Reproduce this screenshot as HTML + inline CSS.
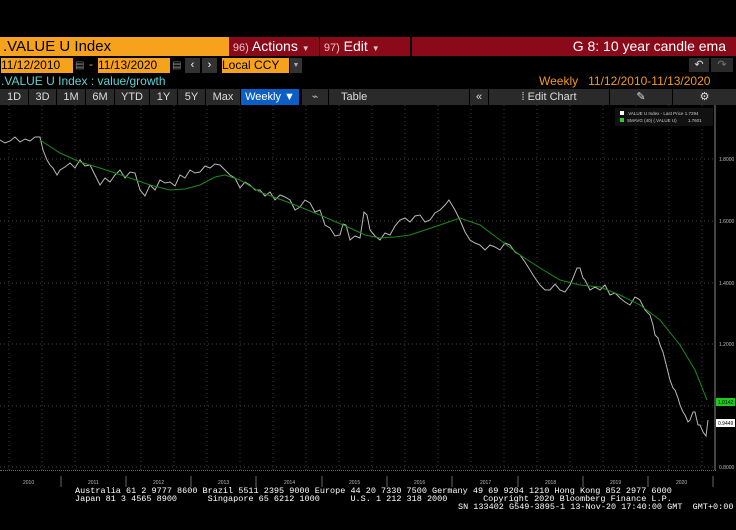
<!DOCTYPE html><html><head><style>
body{margin:0;width:736px;height:530px;background:#000;font-family:"Liberation Sans",sans-serif;position:relative;overflow:hidden;color:#fff}
.a{position:absolute;white-space:nowrap}
.tb{position:absolute;top:89px;height:16px;background:#2a2a2a;color:#ddd;font-size:11px;line-height:16px;text-align:center}
.ft{font-family:"Liberation Mono",monospace;font-size:8.5px;color:#fff;line-height:9px}
</style></head><body>
<div class="a" style="left:0;top:37px;width:228px;height:19px;background:#f7a21c;color:#000;font-size:15px;line-height:19px;padding-left:3px">.VALUE U Index</div>
<div class="a" style="left:229px;top:37px;width:90px;height:19px;background:#8b0a1a;font-size:14px;line-height:19px">&nbsp;<span style="color:#f0c0c0;font-size:11px">96)</span> Actions <span style="font-size:8px;color:#ccc">▼</span></div>
<div class="a" style="left:320px;top:37px;width:90px;height:19px;background:#8b0a1a;font-size:14px;line-height:19px">&nbsp;<span style="color:#f0c0c0;font-size:11px">97)</span> Edit <span style="font-size:8px;color:#ccc">▼</span></div>
<div class="a" style="left:412px;top:37px;width:324px;height:19px;background:#8b0a1a;font-size:14px;line-height:19px;text-align:right;padding-right:0"><span style="position:absolute;right:10px">G 8: 10 year candle ema</span></div>
<div class="a" style="left:1px;top:58px;width:72px;height:15px;background:#f7a21c;color:#000;font-size:12px;line-height:15px">11/12/2010</div>
<div class="a" style="left:75px;top:58px;width:10px;height:15px;color:#888;font-size:10px;line-height:15px">▤</div>
<div class="a" style="left:89px;top:57px;color:#f7a21c;font-size:12px">-</div>
<div class="a" style="left:98px;top:58px;width:72px;height:15px;background:#f7a21c;color:#000;font-size:12px;line-height:15px">11/13/2020</div>
<div class="a" style="left:172px;top:58px;width:10px;height:15px;color:#888;font-size:10px;line-height:15px">▤</div>
<div class="a" style="left:185px;top:58px;width:15px;height:15px;background:#333;font-size:11px;line-height:15px;text-align:center">‹</div>
<div class="a" style="left:202px;top:58px;width:15px;height:15px;background:#333;font-size:11px;line-height:15px;text-align:center">›</div>
<div class="a" style="left:222px;top:58px;width:67px;height:15px;background:#f7a21c;color:#000;font-size:12px;line-height:15px">Local CCY</div>
<div class="a" style="left:290px;top:58px;width:12px;height:15px;background:#333;color:#aaa;font-size:7px;line-height:15px;text-align:center">▼</div>
<div class="a" style="left:689px;top:58px;width:20px;height:14px;background:#2a2a2a;color:#ddd;font-size:11px;line-height:14px;text-align:center">↶</div>
<div class="a" style="left:711px;top:58px;width:22px;height:14px;background:#2a2a2a;color:#777;font-size:11px;line-height:14px;text-align:center">↷</div>
<div class="a" style="left:1px;top:74px;color:#5fd3d3;font-size:12px">.VALUE U Index : value/growth</div>
<div class="a" style="left:539px;top:74px;color:#f39a1c;font-size:12px">Weekly&nbsp;&nbsp; 11/12/2010-11/13/2020</div>
<div class="tb" style="left:0;width:28px">1D</div><div class="tb" style="left:29px;width:27px">3D</div><div class="tb" style="left:57px;width:28px">1M</div><div class="tb" style="left:86px;width:28px">6M</div><div class="tb" style="left:115px;width:34px">YTD</div><div class="tb" style="left:150px;width:27px">1Y</div><div class="tb" style="left:178px;width:27px">5Y</div><div class="tb" style="left:206px;width:34px">Max</div>
<div class="tb" style="left:241px;width:58px;background:#0b5fc4;color:#fff">Weekly ▼</div>
<div class="tb" style="left:302px;width:26px;color:#aaa">⌁</div>
<div class="tb" style="left:329px;width:140px;text-align:left;padding-left:12px;box-sizing:border-box">Table</div>
<div class="tb" style="left:470px;width:18px">«</div>
<div class="tb" style="left:489px;width:120px">⁞ Edit Chart</div>
<div class="tb" style="left:610px;width:62px">✎</div>
<div class="tb" style="left:673px;width:63px">⚙</div>
<svg class="a" style="left:0;top:105px" width="736" height="365" viewBox="0 105 736 365">
<g stroke="#444" stroke-dasharray="1,3" stroke-width="1">
<line x1="0" y1="159" x2="715" y2="159"/><line x1="0" y1="221" x2="715" y2="221"/><line x1="0" y1="283" x2="715" y2="283"/><line x1="0" y1="344" x2="715" y2="344"/><line x1="0" y1="406" x2="715" y2="406"/><line x1="0" y1="467" x2="715" y2="467"/>
</g>
<g stroke="#3a3a3a" stroke-dasharray="1,3">
<line x1="9" y1="105" x2="9" y2="470"/><line x1="42" y1="105" x2="42" y2="470"/><line x1="75" y1="105" x2="75" y2="470"/><line x1="108" y1="105" x2="108" y2="470"/><line x1="141" y1="105" x2="141" y2="470"/><line x1="174" y1="105" x2="174" y2="470"/><line x1="207" y1="105" x2="207" y2="470"/><line x1="240" y1="105" x2="240" y2="470"/><line x1="273" y1="105" x2="273" y2="470"/><line x1="306" y1="105" x2="306" y2="470"/><line x1="339" y1="105" x2="339" y2="470"/><line x1="372" y1="105" x2="372" y2="470"/><line x1="405" y1="105" x2="405" y2="470"/><line x1="438" y1="105" x2="438" y2="470"/><line x1="471" y1="105" x2="471" y2="470"/><line x1="504" y1="105" x2="504" y2="470"/><line x1="537" y1="105" x2="537" y2="470"/><line x1="570" y1="105" x2="570" y2="470"/><line x1="603" y1="105" x2="603" y2="470"/><line x1="636" y1="105" x2="636" y2="470"/><line x1="669" y1="105" x2="669" y2="470"/><line x1="702" y1="105" x2="702" y2="470"/>
</g>
<line x1="715" y1="105" x2="715" y2="470" stroke="#888"/>
<g font-family="Liberation Sans" font-size="5" fill="#bbb"><text x="719" y="161">1.8000</text><text x="719" y="223">1.6000</text><text x="719" y="285">1.4000</text><text x="719" y="346">1.2000</text><text x="719" y="469">0.8000</text></g>
<polyline fill="none" stroke="#b8b8b8" stroke-width="1" points="0,140 5,143 10,141 15,137 20,142 25,139 30,141 35,137 40,137 43,150 47,160 50,165 53,168 57,175 60,170 65,167 70,163 75,168 80,160 85,166 90,165 95,175 100,185 105,178 110,182 115,175 120,170 125,178 130,172 135,173 140,190 145,196 150,185 155,190 160,180 165,183 170,182 175,186 180,175 185,178 190,170 195,173 200,172 205,166 210,168 215,164 220,165 225,170 230,175 235,178 240,188 245,182 250,185 255,190 260,190 265,196 270,192 275,200 280,195 285,197 290,200 295,210 300,207 305,200 310,203 315,212 320,210 325,225 330,228 335,236 340,235 343,224 346,225 350,240 355,236 360,238 364,212 367,215 370,230 375,236 380,240 385,233 390,235 395,226 400,220 405,218 410,222 415,216 420,215 425,222 430,220 435,213 440,210 445,205 449,200 452,205 455,210 460,220 465,232 470,240 475,243 480,245 485,250 490,245 495,247 500,250 505,243 510,245 515,252 520,255 525,262 530,270 535,278 540,285 545,290 550,290 555,284 560,290 565,292 570,285 573,278 577,268 580,268 583,278 585,280 590,290 595,287 600,290 605,285 610,295 615,293 620,298 625,302 630,305 635,297 640,300 645,310 650,315 653,325 655,335 658,338 660,345 663,352 665,360 668,372 670,380 673,388 675,390 678,398 680,405 683,412 685,415 688,422 690,420 693,412 695,412 698,425 700,425 703,432 706,436 708,420"/>
<polyline fill="none" stroke="#1b8a1b" stroke-width="1" points="40,140 60,153 80,162 100,168 130,178 150,185 170,190 185,189 200,185 215,177 225,175 240,180 260,192 290,203 320,215 350,228 365,235 380,238 395,237 410,235 425,230 440,225 460,218 480,225 500,240 520,255 540,268 560,280 580,285 600,287 620,295 640,305 660,320 680,345 695,370 707,400"/>
<rect x="716" y="398" width="19" height="8" fill="#1ecb1e"/><text x="718" y="404" font-size="5" fill="#000" font-family="Liberation Sans">1.0142</text>
<rect x="716" y="419" width="19" height="8" fill="#fff"/><text x="718" y="425" font-size="5" fill="#000" font-family="Liberation Sans">0.9449</text>
<rect x="615" y="108" width="98" height="18" fill="#111"/>
<rect x="620" y="111" width="4" height="4" fill="#fff"/><rect x="620" y="118" width="4" height="4" fill="#2ecc2e"/>
<g font-family="Liberation Sans" font-size="4.5" fill="#ccc"><text x="627" y="115">.VALUE U Index - Last Price 1.7294</text><text x="627" y="122">SMAVG (40) (.VALUE U)&#160;&#160;&#160;&#160;&#160;&#160;&#160;&#160; 1.7601</text></g>
</svg>
<div class="a" style="left:0;top:470px;width:716px;height:1px;border-top:1px dotted #666"></div>
<svg class="a" style="left:0;top:474px" width="736" height="16"><g font-family="Liberation Sans" font-size="5" fill="#bbb"><text x="23" y="10">2010</text><text x="88" y="10">2011</text><text x="153" y="10">2012</text><text x="218" y="10">2013</text><text x="284" y="10">2014</text><text x="349" y="10">2015</text><text x="414" y="10">2016</text><text x="480" y="10">2017</text><text x="545" y="10">2018</text><text x="610" y="10">2019</text><text x="676" y="10">2020</text></g>
<g stroke="#666"><line x1="61" y1="2" x2="61" y2="13"/><line x1="126" y1="2" x2="126" y2="13"/><line x1="191" y1="2" x2="191" y2="13"/><line x1="256" y1="2" x2="256" y2="13"/><line x1="322" y1="2" x2="322" y2="13"/><line x1="387" y1="2" x2="387" y2="13"/><line x1="452" y1="2" x2="452" y2="13"/><line x1="518" y1="2" x2="518" y2="13"/><line x1="583" y1="2" x2="583" y2="13"/><line x1="648" y1="2" x2="648" y2="13"/><line x1="713" y1="2" x2="713" y2="13"/></g></svg>
<div class="a ft" style="left:75px;top:487px">Australia 61 2 9777 8600 Brazil 5511 2395 9000 Europe 44 20 7330 7500 Germany 49 69 9204 1210 Hong Kong 852 2977 6000</div>
<div class="a ft" style="left:75px;top:495px">Japan 81 3 4565 8900&nbsp;&nbsp;&nbsp;&nbsp;&nbsp; Singapore 65 6212 1000&nbsp;&nbsp;&nbsp;&nbsp;&nbsp; U.S. 1 212 318 2000&nbsp;&nbsp;&nbsp;&nbsp;&nbsp;&nbsp; Copyright 2020 Bloomberg Finance L.P.</div>
<div class="a ft" style="left:458px;top:503px">SN 133402 G549-3895-1 13-Nov-20 17:40:00 GMT&nbsp; GMT+0:00</div>
</body></html>
